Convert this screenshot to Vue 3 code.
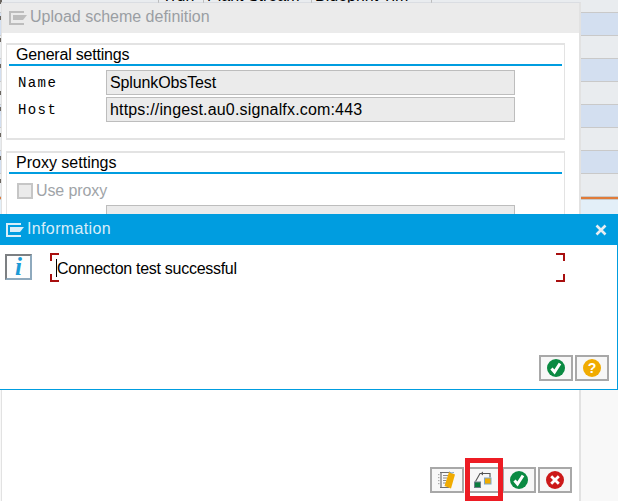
<script setup>
const rows = [
  { h: 13, tone: 'grey', dash: 0 },
  { h: 23, tone: 'blue', dash: 3 },
  { h: 23, tone: 'grey', dash: 2 },
  { h: 23, tone: 'blue', dash: 5 },
  { h: 23, tone: 'grey', dash: 9 },
  { h: 23, tone: 'blue', dash: 2 },
  { h: 23, tone: 'grey', dash: 5 },
  { h: 23, tone: 'blue', dash: 5 },
  { h: 23, tone: 'grey', dash: 5 }
]
</script>

<template>
  <div class="screen">
    <div class="backdrop">
      <div
        v-for="(r, i) in rows"
        :key="i"
        class="stripe"
        :class="r.tone"
        :style="{ height: r.h + 'px', paddingTop: r.dash + 'px' }"
      >
        <i class="dash"></i>
        <div v-if="i === 0" class="heads">
          <span class="hc c1"></span>
          <span class="hc c2">Trun</span>
          <span class="hc c3">Plant Stream</span>
          <span class="hc c4">Blueprint Tim</span>
        </div>
      </div>
      <div class="orange"></div>
      <div class="pale"></div>
      <div class="rest"></div>
    </div>

    <section class="win back">
      <header class="tbar">
        <svg class="winicon" width="18" height="14" viewBox="0 0 18 14">
          <path d="M0 0h15v2H2v10h13v2H0z" fill="#bdbdbd" />
          <path d="M4 4h14l-4 5H4z" fill="#bdbdbd" />
        </svg>
        <span class="ttl">Upload scheme definition</span>
      </header>

      <div class="group first">
        <h3 class="tight">General settings</h3>
        <div class="row">
          <label>Name</label>
          <div class="field">SplunkObsTest</div>
        </div>
        <div class="row">
          <label>Host</label>
          <div class="field wide">https://ingest.au0.signalfx.com:443</div>
        </div>
      </div>

      <div class="group second">
        <h3>Proxy settings</h3>
        <div class="check">
          <span class="box"></span>
          <span>Use proxy</span>
        </div>
        <div class="row proxyhost">
          <label>Host</label>
          <div class="field"></div>
        </div>
      </div>

      <footer class="actions">
        <button class="btn" type="button" aria-label="Edit">
          <svg width="20" height="20" viewBox="0 0 20 20">
            <path d="M3 2.500h9.500M3 17.500h9M4 2.500v15" stroke="#6f6f6f" stroke-width="1.200" fill="none" />
            <path d="M6 5.500h5M6 8h4M6 10.500h3.500M6 13h3M1.800 4v1.200M1.800 7v1.200M1.800 10v1.200M1.800 13v1.200" stroke="#8a8a8a" stroke-width="1" fill="none" />
            <path d="M12 2l6 2.500-4 14-6.500-2.500z" fill="#f0ab00" />
            <path d="M12.500 1.500l1.500 1.500 3-.5" stroke="#7fa6c7" stroke-width="1" fill="none" />
          </svg>
        </button>
        <button class="btn" type="button" aria-label="Connection test">
          <svg width="20" height="18" viewBox="0 0 20 18">
            <path d="M2.500 10.500L7 2.500h10v4" stroke="#555" stroke-width="1.100" fill="none" />
            <path d="M10 .6L7.500 2.500 10 4.400z" fill="#555" />
            <rect x="1.500" y="11" width="6" height="5.500" fill="#0a7d3e" stroke="#6f7f88" />
            <rect x="11.500" y="7" width="6.500" height="6" fill="#f0ab00" stroke="#7fa6c7" />
          </svg>
        </button>
        <button class="btn" type="button" aria-label="Confirm">
          <svg viewBox="0 0 18 18" width="18" height="18">
            <circle cx="9" cy="9" r="9" fill="#0a8a42" />
            <path d="M4.500 9.500l3 3.500L13 4.500" fill="none" stroke="#fff" stroke-width="3" />
          </svg>
        </button>
        <button class="btn" type="button" aria-label="Cancel">
          <svg viewBox="0 0 18 18" width="18" height="18">
            <circle cx="9" cy="9" r="9" fill="#cc1919" />
            <path d="M5.200 5.200l7.600 7.600M12.800 5.200l-7.600 7.600" stroke="#fff" stroke-width="2.800" />
          </svg>
        </button>
      </footer>
    </section>

    <section class="win info">
      <header class="tbar blue">
        <svg class="winicon" width="18" height="14" viewBox="0 0 18 14">
          <path d="M0 0h15v2H2v10h13v2H0z" fill="#d9eef9" />
          <path d="M4 4h14l-4 5H4z" fill="#d9eef9" />
        </svg>
        <span class="ttl grow">Information</span>
        <svg class="close" width="12" height="12" viewBox="0 0 12 12">
          <path d="M1.500 1.500l9 9M10.500 1.500l-9 9" stroke="#e8eef2" stroke-width="2.600" />
        </svg>
      </header>
      <div class="message">
        <div class="iconbox"><span>i</span></div>
        <div class="msg">
          <i class="cnr tl"></i><i class="cnr tr"></i><i class="cnr bl"></i><i class="cnr br"></i>
          <span class="txt">Connecton test successful</span>
        </div>
      </div>
      <footer class="actions small">
        <button class="btn" type="button" aria-label="Yes">
          <svg viewBox="0 0 18 18" width="18" height="18">
            <circle cx="9" cy="9" r="9" fill="#0a8a42" />
            <path d="M4.500 9.500l3 3.500L13 4.500" fill="none" stroke="#fff" stroke-width="3" />
          </svg>
        </button>
        <button class="btn" type="button" aria-label="Help">
          <svg viewBox="0 0 18 18" width="18" height="18">
            <circle cx="9" cy="9" r="9" fill="#f0ab00" />
            <text x="9" y="14" text-anchor="middle" class="qm">?</text>
          </svg>
        </button>
      </footer>
    </section>

    <div class="marker"></div>
  </div>
</template>

<style scoped>
.screen {
  position: relative;
  width: 618px;
  height: 501px;
  overflow: hidden;
  background: #f8f8f8;
  font-family: "Liberation Sans", Arial, sans-serif;
  font-size: 16px;
  color: #000;
}
.backdrop {
  display: flex;
  flex-direction: column;
  height: 100%;
}
.stripe {
  box-sizing: border-box;
  border-bottom: 1px solid #c9c9c9;
  overflow: hidden;
  flex: none;
  position: relative;
}
.stripe.grey { background: #e9ecef; }
.stripe.blue { background: #d3dff0; }
.dash {
  display: block;
  width: 2px;
  height: 4px;
  background: #6b6660;
}
.heads {
  position: absolute;
  left: 0;
  top: -13px;
  display: flex;
  height: 17px;
  line-height: 17px;
  white-space: nowrap;
}
.hc { display: block; box-sizing: border-box; padding-left: 3px; border-right: 1px solid #bdbdbd; }
.c1 { width: 159px; }
.c2 { width: 45px; }
.c3 { width: 108px; }
.c4 { width: 120px; }
.orange {
  flex: none;
  height: 2px;
  background: #e07b39;
  border-bottom: 1px solid #c9c9c9;
}
.pale { flex: none; height: 190px; background: #e3eff8; }
.rest { flex: 1; background: #f8f8f8; }

.win {
  position: absolute;
  box-sizing: border-box;
  display: flex;
  flex-direction: column;
  background: #fff;
}
.back {
  left: 1px;
  top: 2px;
  width: 580px;
  height: 499px;
  border: 0 solid #e2e2e2;
  border-width: 1px 2px 0 1px;
  border-top-color: rgba(200, 205, 210, .45);
  background-clip: padding-box;
}
.info {
  left: 0;
  top: 214px;
  width: 618px;
  height: 176px;
  border-right: 1px solid #009de0;
  border-bottom: 1px solid #009de0;
}
.tbar {
  flex: none;
  height: 30px;
  display: flex;
  align-items: center;
  gap: 3px;
  padding-left: 7px;
  background: #ebebeb;
  color: #9a9ea3;
  font-size: 16px;
}
.ttl { margin-top: -2px; }
.tbar.blue {
  height: 31px;
  margin-right: -1px;
  padding-left: 6px;
  background: #009de0;
  color: #d9eef9;
}
.tbar.blue .ttl { letter-spacing: .36px; }
.grow { flex: 1; }
.close { margin-right: 11px; }

.group {
  flex: none;
  box-sizing: border-box;
  margin: 10px 14px 0 4px;
  border: 1px solid #e3e3e3;
  border-width: 2px 1px 2px 1px;
  padding: 0 2px;
}
.group.first { height: 97px; }
.group.second { height: 80px; margin-top: 11px; }
h3 {
  margin: 0;
  height: 19px;
  box-sizing: content-box;
  padding-left: 7px;
  font-weight: 400;
  font-size: 16px;
  line-height: 20px;
  border-bottom: 2px solid #009de0;
}
.tight { letter-spacing: -.2px; }
.row {
  display: flex;
  align-items: center;
  height: 25px;
  margin-top: 2px;
}
.first .row:first-of-type { margin-top: 4px; }
label {
  width: 97px;
  padding-left: 9px;
  box-sizing: border-box;
  font-family: "Liberation Mono", "Courier New", monospace;
  font-size: 14px;
  letter-spacing: 1.400px;
}
.proxyhost label { padding-top: 4px; }
.field {
  width: 409px;
  height: 25px;
  box-sizing: border-box;
  border: 1px solid #bdbdbd;
  background: #ebebeb;
  padding-left: 3px;
  line-height: 23px;
  letter-spacing: -.12px;
}
.field.wide { letter-spacing: .17px; }
.check {
  display: flex;
  align-items: center;
  gap: 3px;
  height: 16px;
  margin: 9px 0 0 8px;
  color: #a0a4a8;
  letter-spacing: -.1px;
}
.box {
  width: 16px;
  height: 16px;
  box-sizing: border-box;
  border: 2px solid #c6c6c6;
  background: #ebebeb;
}
.proxyhost { margin-top: 6px; }

.actions {
  display: flex;
  justify-content: flex-end;
  gap: 2px;
  margin-top: auto;
  padding: 0 7px 8px 0;
}
.actions.small { padding: 0 8px 8px 0; }
.btn {
  width: 34px;
  height: 26px;
  box-sizing: border-box;
  padding: 0;
  display: flex;
  align-items: center;
  justify-content: center;
  border: 2px solid #a8a8a8;
  background: #f7f7f7;
}
.qm {
  font: 700 14px "Liberation Sans", Arial, sans-serif;
  fill: #fff;
}

.message {
  flex: none;
  display: flex;
  padding: 8px 0 0 5px;
  gap: 18px;
}
.iconbox {
  flex: none;
  margin-top: 1px;
  width: 27px;
  height: 26px;
  box-sizing: border-box;
  border: 2px solid #7c7f82;
  border-right-color: #8ea9bd;
  border-bottom-color: #8ea9bd;
  background: #fdfdfd;
  display: flex;
  align-items: center;
  justify-content: center;
  color: #1a9ad6;
  font: italic 700 25px "Liberation Serif", "Times New Roman", serif;
}
.msg {
  position: relative;
  width: 515px;
  height: 29px;
  box-sizing: border-box;
  padding-left: 7px;
  display: flex;
  align-items: center;
}
.txt {
  border-left: 1px solid #000;
  height: 18px;
  line-height: 20px;
  white-space: nowrap;
  margin-left: -1px;
  margin-top: 1px;
  letter-spacing: -.28px;
}
.cnr {
  position: absolute;
  width: 7px;
  height: 6px;
  border: 0 solid #a80f0f;
}
.tl { left: 0; top: 0; border-width: 2px 0 0 2px; }
.tr { right: 0; top: 0; border-width: 2px 2px 0 0; }
.bl { left: 0; bottom: 0; border-width: 0 0 2px 2px; }
.br { right: 0; bottom: 0; border-width: 0 2px 2px 0; }

.marker {
  position: absolute;
  left: 465px;
  top: 458px;
  width: 38px;
  height: 43px;
  box-sizing: border-box;
  border: 5px solid #ed1c24;
}
</style>
